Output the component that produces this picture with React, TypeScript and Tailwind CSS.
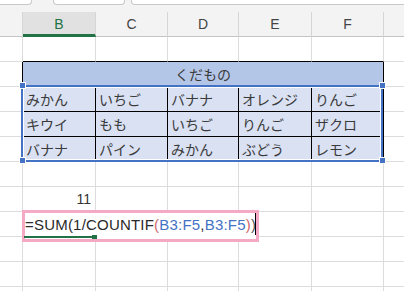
import React from 'react';

const G = 'border-[#dcdcdc]';

function Cell({ w, cls = '', children }: { w: string; cls?: string; children?: React.ReactNode }) {
  return <div className={`${w} h-full shrink-0 border-r border-b flex items-center ${cls}`}>{children}</div>;
}

const jp = "font-['Noto_Sans_CJK_JP',sans-serif] text-[14px] text-[#3a3a3a] pl-[3px] leading-none";

const data = [
  ['みかん', 'いちご', 'バナナ', 'オレンジ', 'りんご'],
  ['キウイ', 'もも', 'いちご', 'りんご', 'ザクロ'],
  ['バナナ', 'パイン', 'みかん', 'ぶどう', 'レモン'],
];
const W = ['w-[73px]', 'w-[72px]', 'w-[71px]', 'w-[73px]', 'w-[72px]'];

function EmptyRow() {
  return (
    <div className="flex h-[25px]">
      <Cell w="w-[23px]" cls={G} />
      {W.map((w, i) => (
        <Cell key={i} w={w} cls={G} />
      ))}
      <div className={`flex-1 h-full border-b ${G}`} />
    </div>
  );
}

export default function App() {
  return (
    <div className="relative w-[404px] h-[291px] overflow-hidden bg-white font-['Liberation_Sans',sans-serif]">
      {/* top strip with panel bottoms */}
      <div className="flex h-[12px] bg-[#f3f3f3]">
        <div className="ml-[-4px] w-[36px] h-[5px] bg-white border border-t-0 border-[#c8c8c8] rounded-b-[4px]" />
        <div className="ml-[21px] w-[72px] h-[5px] bg-white border border-t-0 border-[#c8c8c8] rounded-b-[4px]" />
        <div className="ml-[6px] mr-[-6px] flex-1 h-[5px] bg-white border border-t-0 border-[#c8c8c8] rounded-b-[4px]" />
      </div>
      {/* column headers */}
      <div className="flex h-[25px] bg-[#f3f3f3] text-[14px] text-[#444]">
        <div className="w-[23px] h-full shrink-0 border-r border-b border-r-[#d6d6d6] border-b-[#c4c4c4]" />
        <div className="w-[73px] h-full shrink-0 border-r border-r-[#d6d6d6] border-b-[3px] border-b-[#217346] bg-[#e1e1e1] flex items-center justify-center pt-[2px] text-[#217346]">B</div>
        {['C', 'D', 'E', 'F'].map((c, i) => (
          <div key={c} className={`${W[i + 1]} h-full shrink-0 border-r border-b border-r-[#d6d6d6] border-b-[#c4c4c4] flex items-center justify-center`}>{c}</div>
        ))}
        <div className="flex-1 h-full border-b border-b-[#c4c4c4]" />
      </div>

      {/* row 1 */}
      <div className="flex h-[25px]">
        <Cell w="w-[23px]" cls={G} />
        {W.map((w, i) => (
          <Cell key={i} w={w} cls="border-r-[#dcdcdc] border-b-black" />
        ))}
        <div className={`flex-1 h-full border-b ${G}`} />
      </div>
      {/* row 2 : table title */}
      <div className="flex h-[25px]">
        <Cell w="w-[23px]" cls="border-r-black border-b-[#dcdcdc]" />
        <Cell w="w-[361px]" cls={`border-black bg-[#b4c6e7] justify-center font-['Noto_Sans_CJK_JP',sans-serif] text-[14px] text-[#3a3a3a] leading-none`}>くだもの</Cell>
        <div className={`flex-1 h-full border-b ${G}`} />
      </div>
      {/* rows 3-5 */}
      {data.map((r, ri) => (
        <div key={ri} className="flex h-[25px]">
          <Cell w="w-[23px]" cls="border-r-black border-b-[#dcdcdc]" />
          {r.map((t, i) => (
            <Cell key={i} w={W[i]} cls={`border-black bg-[#d9e1f2] ${jp}`}>{t}</Cell>
          ))}
          <div className={`flex-1 h-full border-b ${G}`} />
        </div>
      ))}
      {/* row 6 */}
      <EmptyRow />
      {/* row 7 */}
      <div className="flex h-[25px]">
        <Cell w="w-[23px]" cls={G} />
        <Cell w="w-[73px]" cls={`${G} justify-end pr-[4px] text-[14px] text-[#333]`}>11</Cell>
        {W.slice(1).map((w, i) => (
          <Cell key={i} w={w} cls={G} />
        ))}
        <div className={`flex-1 h-full border-b ${G}`} />
      </div>
      {/* row 8 : editing row */}
      <div className="flex h-[25px]">
        <Cell w="w-[23px]" cls={G} />
        <Cell w="w-[289px]" cls={G} />
        <Cell w="w-[72px]" cls={G} />
        <div className={`flex-1 h-full border-b ${G}`} />
      </div>
      <EmptyRow />
      <EmptyRow />
      <EmptyRow />

      {/* table selection */}
      <div className="absolute left-[21px] top-[85px] w-[362px] h-[77px] border-2 border-[#4472c4] shadow-[inset_0_0_0_1px_#ffffff]" />
      <div className="absolute left-[19px] top-[82px] w-[7px] h-[7px] bg-[#4472c4] border border-white" />
      <div className="absolute left-[379px] top-[82px] w-[7px] h-[7px] bg-[#4472c4] border border-white" />
      <div className="absolute left-[19px] top-[157px] w-[7px] h-[7px] bg-[#4472c4] border border-white" />
      <div className="absolute left-[379px] top-[157px] w-[7px] h-[7px] bg-[#4472c4] border border-white" />

      {/* formula editor */}
      <div className="absolute left-[22px] top-[210px] w-[237px] h-[32px] border-[3px] border-[#f4a9c4] bg-white">
        <div className="flex items-start pt-[4px] text-[15px] leading-[15px] tracking-[0.2px] text-[#2a2a2a] whitespace-nowrap">
          <span>=SUM(1/COUNTIF</span>
          <span className="text-[#d0686a]">(</span>
          <span className="text-[#4472c4]">B3:F5</span>
          <span>,</span>
          <span className="text-[#4472c4]">B3:F5</span>
          <span className="text-[#d0686a]">)</span>
          <span className="text-[#555]">)</span>
        </div>
      </div>
      <div className="absolute left-[255px] top-[213px] w-px h-[22px] bg-black" />
      <div className="absolute left-[24px] top-[236px] w-[68px] h-[2px] bg-[#217346]" />
      <div className="absolute left-[92px] top-[235px] w-[5px] h-[4px] bg-[#217346]" />
    </div>
  );
}
